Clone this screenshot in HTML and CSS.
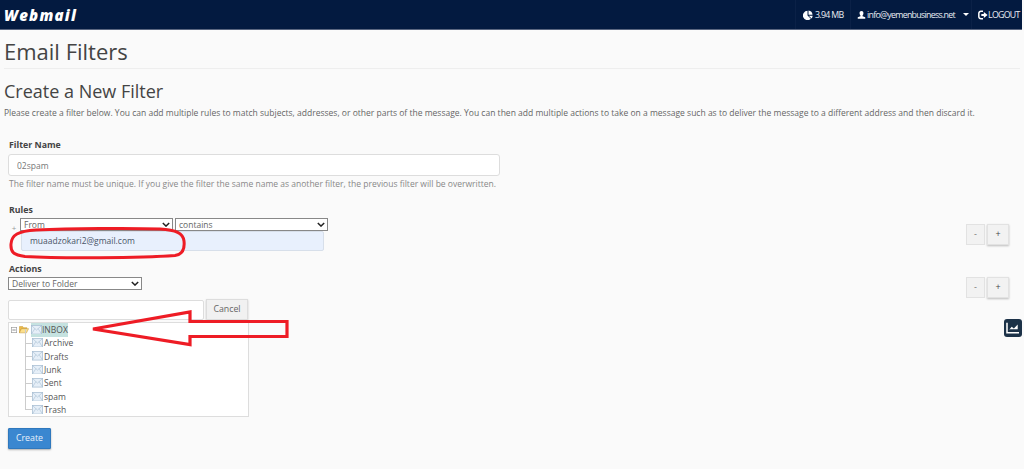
FILE: index.html
```html
<!DOCTYPE html>
<html lang="en">
<head>
<meta charset="utf-8">
<title>Email Filters</title>
<link rel="stylesheet" href="styles.css">
</head>
<body>
<header class="topbar">
  <div class="logo">Webmail</div>
  <nav class="topnav">
    <div class="topitem quota">
      <svg class="ico" viewBox="0 0 12 12"><path d="M5.400 1v5.600l4 4A5.600 5.600 0 1 1 5.400 1z" fill="#fff"/><path d="M6.600 .6a5.400 5.400 0 0 1 4.800 5H6.600z" fill="#fff"/><path d="M7 7h4.600a5.600 5.600 0 0 1-1.300 3.200z" fill="#fff"/></svg>
      <span>3.94 MB</span>
    </div>
    <div class="topitem user">
      <svg class="ico" viewBox="0 0 12 12"><path d="M6 .8c1.700 0 2.600 1.200 2.600 2.900 0 1.200-.5 2.200-1.200 2.800v1l3.600 1.400V11H1V8.900l3.600-1.400v-1C3.900 5.900 3.400 4.900 3.400 3.700 3.400 2 4.300.8 6 .8z" fill="#fff"/></svg>
      <span>info@yemenbusiness.net</span>
      <i class="caret"></i>
    </div>
    <div class="topitem logout">
      <svg class="ico" viewBox="0 0 12 12"><path d="M6 1.500H3.500A2.500 2.500 0 0 0 1 4v4a2.500 2.500 0 0 0 2.500 2.500H6" fill="none" stroke="#fff" stroke-width="1.800"/><path d="M4 4.700h3V2.500L11.500 6 7 9.500V7.300H4z" fill="#fff"/></svg>
      <span>LOGOUT</span>
    </div>
  </nav>
</header>

<main class="page">
  <h1 class="title">Email Filters</h1>
  <h2 class="subtitle">Create a New Filter</h2>
  <p class="intro">Please create a filter below. You can add multiple rules to match subjects, addresses, or other parts of the message. You can then add multiple actions to take on a message such as to deliver the message to a different address and then discard it.</p>

  <form class="form">
    <label class="label">Filter Name</label>
    <input class="field name" type="text" value="02spam">
    <p class="help">The filter name must be unique. If you give the filter the same name as another filter, the previous filter will be overwritten.</p>

    <label class="label rules-label">Rules</label>
    <div class="row rule-row">
      <span class="grip">+</span>
      <div class="rule-main">
        <div class="selects">
          <div class="sel from">From<svg class="chev" viewBox="0 0 10 6"><path d="M1 1l4 4 4-4" fill="none" stroke="#222" stroke-width="1.800"/></svg></div>
          <div class="sel contains">contains<svg class="chev" viewBox="0 0 10 6"><path d="M1 1l4 4 4-4" fill="none" stroke="#222" stroke-width="1.800"/></svg></div>
        </div>
        <div class="value">muaadzokari2@gmail.com</div>
      </div>
      <div class="btns"><span class="btn minus">-</span><span class="btn plus">+</span></div>
    </div>

    <label class="label actions-label">Actions</label>
    <div class="row action-row">
      <div class="sel deliver">Deliver to Folder<svg class="chev" viewBox="0 0 10 6"><path d="M1 1l4 4 4-4" fill="none" stroke="#222" stroke-width="1.800"/></svg></div>
      <div class="btns"><span class="btn minus">-</span><span class="btn plus">+</span></div>
    </div>

    <div class="folder-row">
      <div class="folder-input"></div>
      <span class="cancel">Cancel</span>
    </div>

    <div class="tree">
      <div class="node root">
        <svg class="expander" viewBox="0 0 9 9"><rect x=".5" y=".5" width="8" height="8" fill="#fff" stroke="#999"/><path d="M2 4.500h5" stroke="#555"/></svg>
        <svg class="folder" viewBox="0 0 12 10"><path d="M.5 9V1.500h4l1 1.300h4V4H3L.5 9z" fill="#eebc4a" stroke="#c4942f" stroke-width=".6"/><path d="M.5 9 3 4h8.500L9 9z" fill="#fbdf8c" stroke="#c4942f" stroke-width=".6"/></svg>
        <span class="sel-box">
          <svg class="mail" viewBox="0 0 14 12"><rect x=".5" y=".5" width="13" height="11" fill="#e6eff8" stroke="#aac0d4"/><path d="M.5.500 7 6.500l6.500-6M.5 11.500 5 4.500M13.500 11.500 9 4.500" fill="none" stroke="#aac0d4" stroke-width=".8"/></svg>INBOX
        </span>
      </div>
      <ul class="children">
        <li class="node"><svg class="mail" viewBox="0 0 14 12"><rect x=".5" y=".5" width="13" height="11" fill="#e6eff8" stroke="#aac0d4"/><path d="M.5.500 7 6.500l6.500-6M.5 11.500 5 4.500M13.500 11.500 9 4.500" fill="none" stroke="#aac0d4" stroke-width=".8"/></svg>Archive</li>
        <li class="node"><svg class="mail" viewBox="0 0 14 12"><rect x=".5" y=".5" width="13" height="11" fill="#e6eff8" stroke="#aac0d4"/><path d="M.5.500 7 6.500l6.500-6M.5 11.500 5 4.500M13.500 11.500 9 4.500" fill="none" stroke="#aac0d4" stroke-width=".8"/></svg>Drafts</li>
        <li class="node"><svg class="mail" viewBox="0 0 14 12"><rect x=".5" y=".5" width="13" height="11" fill="#e6eff8" stroke="#aac0d4"/><path d="M.5.500 7 6.500l6.500-6M.5 11.500 5 4.500M13.500 11.500 9 4.500" fill="none" stroke="#aac0d4" stroke-width=".8"/></svg>Junk</li>
        <li class="node"><svg class="mail" viewBox="0 0 14 12"><rect x=".5" y=".5" width="13" height="11" fill="#e6eff8" stroke="#aac0d4"/><path d="M.5.500 7 6.500l6.500-6M.5 11.500 5 4.500M13.500 11.500 9 4.500" fill="none" stroke="#aac0d4" stroke-width=".8"/></svg>Sent</li>
        <li class="node"><svg class="mail" viewBox="0 0 14 12"><rect x=".5" y=".5" width="13" height="11" fill="#e6eff8" stroke="#aac0d4"/><path d="M.5.500 7 6.500l6.500-6M.5 11.500 5 4.500M13.500 11.500 9 4.500" fill="none" stroke="#aac0d4" stroke-width=".8"/></svg>spam</li>
        <li class="node"><svg class="mail" viewBox="0 0 14 12"><rect x=".5" y=".5" width="13" height="11" fill="#e6eff8" stroke="#aac0d4"/><path d="M.5.500 7 6.500l6.500-6M.5 11.500 5 4.500M13.500 11.500 9 4.500" fill="none" stroke="#aac0d4" stroke-width=".8"/></svg>Trash</li>
      </ul>
    </div>

    <span class="create">Create</span>
  </form>
</main>

<div class="chart-tab">
  <svg viewBox="0 0 16 14"><path d="M1 1v11.500h14" fill="none" stroke="#fff" stroke-width="1.800"/><path d="M3.500 9 6.500 5.500 9 7.500 13.500 3v5.500h-10z" fill="#fff"/></svg>
</div>

<svg class="marks" viewBox="0 0 1024 469">
  <path d="M36 230C70 228.500 130 228 160 229 176 230 183 233 184 241 185 250 182 254.500 175 255.500 140 258 60 258.500 25 256.500 13 255 10.500 252 11 244 11.500 235 18 231 36 230z" fill="none" stroke="#ee1c25" stroke-width="3"/>
  <path d="M93 329 190 312v9.500h97v15H190v8z" fill="none" stroke="#ee1c25" stroke-width="3.200" stroke-linejoin="miter"/>
</svg>
</body>
</html>
```
FILE: styles.css
```css
* { box-sizing: border-box; }
html, body { margin: 0; padding: 0; }
body {
  position: relative;
  height: 469px;
  overflow: hidden;
  background: #fafafa;
  color: #555;
  font-family: "Open Sans", "Liberation Sans", sans-serif;
  font-size: 9px;
}
.topbar {
  height: 30px;
  margin-right: 2px;
  background: #031a40;
  border-bottom: 1px solid #5a6680;
  display: flex;
  align-items: center;
  justify-content: space-between;
  color: #fff;
}
.logo {
  margin-left: 4px;
  font-family: "Open Sans", sans-serif;
  font-weight: 800;
  font-style: italic;
  font-size: 15px;
  letter-spacing: 1.2px;
  color: #fff;
}
.topnav { display: flex; height: 100%; }
.topitem {
  display: flex;
  align-items: center;
  gap: 2px;
  font-size: 8.8px;
  letter-spacing: -.7px;
  white-space: nowrap;
  color: #e9edf3;
  border-left: 1px solid #0b2147;
}
.ico { width: 10px; height: 10px; flex: none; }
.quota { width: 55px; padding-left: 7px; }
.user { width: 121px; padding-left: 6px; gap: 1px; }
.user .ico { width: 9px; }
.logout { width: 51px; padding-left: 6px; gap: 0; }
.caret {
  margin-left: 7px;
  border-top: 3px solid #fff;
  border-left: 3px solid transparent;
  border-right: 3px solid transparent;
}
.page { padding: 0 4px; }
.title {
  margin: 8px 0 0;
  padding-bottom: 3px;
  height: 31px;
  font-size: 22px;
  line-height: 26px;
  font-weight: 400;
  color: #444;
  border-bottom: 1px solid #eee;
}
.subtitle {
  margin: 8px 0 0;
  font-size: 18px;
  line-height: 28px;
  font-weight: 400;
  color: #444;
}
.intro { margin: 1px 0 0; font-size: 8.53px; line-height: 13px; color: #666; white-space: nowrap; }
.form { padding-left: 5px; margin-top: 20px; }
.label { display: block; font-weight: 700; font-size: 8.8px; line-height: 12px; color: #444; }
.field.name {
  display: block;
  width: 492px;
  height: 22px;
  margin: 3px 0 0 -1px;
  padding: 0 8px;
  font: 8.5px "Open Sans", sans-serif;
  color: #777;
  background: #fff;
  border: 1px solid #ddd;
  border-radius: 3px;
  outline: none;
}
.help { margin: 2px 0 0; font-size: 8.53px; line-height: 12px; color: #888; white-space: nowrap; }
.rules-label { margin-top: 14px; }
.row { display: flex; justify-content: space-between; align-items: flex-start; }
.rule-row { margin-top: 2px; }
.grip { width: 12px; flex: none; margin-top: 5px; margin-left: -1px; font-size: 8px; line-height: 10px; color: #999; text-align: center; }
.rule-main { flex: 1; }
.selects { display: flex; gap: 2px; margin-left: 0; }
.sel {
  position: relative;
  height: 13px;
  background: #fff;
  border: 1px solid #888;
  font-size: 8.5px;
  line-height: 11px;
  padding-left: 3px;
  color: #666;
  overflow: hidden;
}
.chev { position: absolute; right: 2px; top: 3px; width: 8px; height: 5px; }
.from { width: 153px; }
.contains { width: 153px; }
.value {
  width: 303px;
  height: 20px;
  margin-left: 1px;
  background: #e8f0fd;
  border: 1px solid #d7dfea;
  border-radius: 2px;
  padding-left: 8px;
  font-size: 8.5px;
  line-height: 18px;
  color: #4a5568;
}
.btns { display: flex; gap: 2px; margin-right: 11px; }
.rule-row .btns { margin-top: 6px; }
.btn {
  width: 19px;
  height: 21px;
  background: #f2f2f2;
  border: 1px solid #e2e2e2;
  text-align: center;
  line-height: 18px;
  font-size: 9px;
  color: #777;
}
.plus { width: 22px; box-shadow: 0 1px 2px rgba(0,0,0,.25); color: #444; }
.actions-label { margin-top: 12px; }
.action-row { margin-top: 2px; height: 21px; }
.deliver { width: 134px; margin-left: -1px; flex: none; }
.folder-row { display: flex; gap: 2px; margin: 1px 0 0 -1px; }
.folder-input { width: 196px; height: 20px; margin-top: 1px; background: #fff; border: 1px solid #ddd; border-radius: 2px; }
.cancel {
  width: 42px;
  height: 21px;
  background: #f1f1f1;
  border: 1px solid #ddd;
  box-shadow: 0 1px 2px rgba(0,0,0,.2);
  text-align: center;
  line-height: 19px;
  color: #666;
  font-size: 8.8px;
}
.tree {
  width: 241px;
  height: 95px;
  margin: 2px 0 0 -1px;
  background: #fff;
  border: 1px solid #ddd;
  font-size: 8.5px;
  color: #555;
}
.node { display: flex; align-items: center; height: 13.4px; }
.root { padding-left: 2px; gap: 2px; height: 13px; }
.expander { width: 6px; height: 6px; }
.folder { width: 10px; height: 9px; }
.sel-box { display: flex; align-items: center; background: #c5e2e0; height: 14px; }
.sel-box .mail { margin-right: 0; }
.mail { width: 11px; height: 9.5px; margin-right: 1px; flex: none; }
.children { list-style: none; margin: 0; padding: 0 0 0 23px; }
.children .node { position: relative; }
.children .node::before {
  content: "";
  position: absolute;
  left: -7px;
  top: 6.5px;
  width: 7px;
  border-top: 1px solid #ccc;
}
.children .node::after {
  content: "";
  position: absolute;
  left: -7px;
  top: -7px;
  height: 14px;
  border-left: 1px solid #ccc;
}
.create {
  display: block;
  width: 43px;
  height: 21px;
  margin: 11px 0 0 -1px;
  background: #3a87d0;
  border: 1px solid #2f78bd;
  border-radius: 1px;
  box-shadow: 0 1px 2px rgba(0,0,0,.3);
  color: #e8f2fb;
  text-align: center;
  line-height: 19px;
  font-size: 8.8px;
}
.chart-tab {
  position: absolute;
  right: 2px;
  top: 319px;
  width: 18px;
  height: 18px;
  background: #1c3248;
  border-radius: 3px;
  display: flex;
  align-items: center;
  justify-content: center;
}
.chart-tab svg { width: 14px; height: 12px; }
.marks { position: absolute; left: 0; top: 0; width: 1024px; height: 469px; pointer-events: none; }
```
